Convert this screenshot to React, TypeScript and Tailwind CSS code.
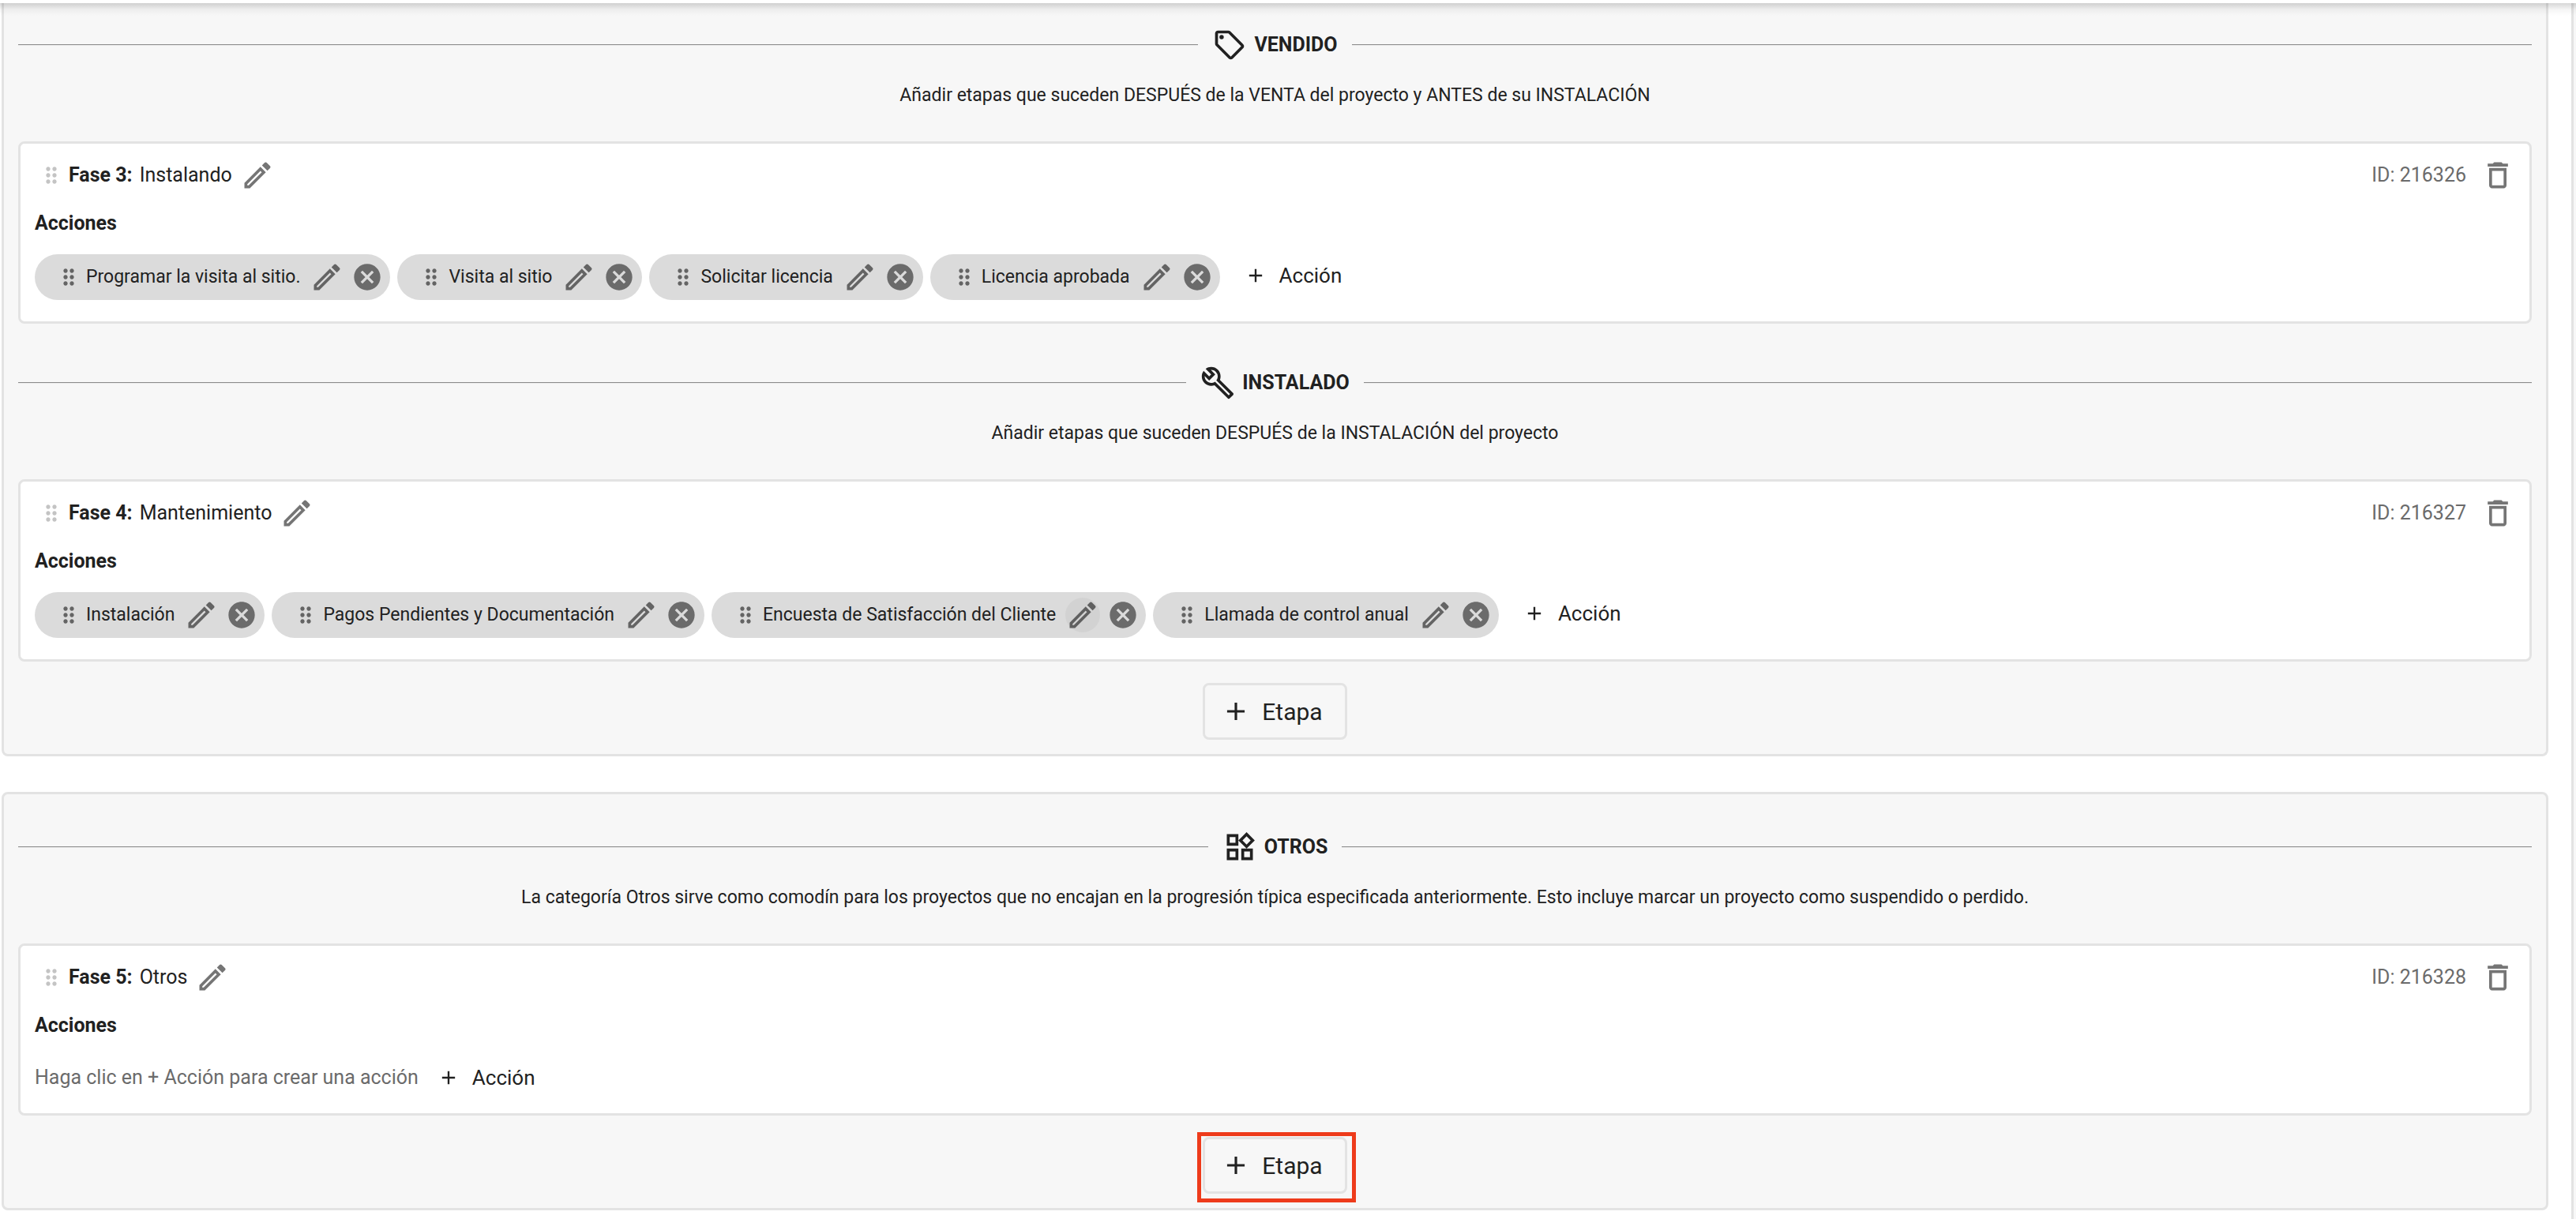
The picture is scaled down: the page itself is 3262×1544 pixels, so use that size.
import { MdAdd, MdCancel, MdDragIndicator, MdOutlineBuild, MdOutlineDelete, MdOutlineEdit, MdOutlineSell, MdOutlineWidgets } from "react-icons/md";

const vendido = ["Programar la visita al sitio.", "Visita al sitio", "Solicitar licencia", "Licencia aprobada"];
const instalado = ["Instalación", "Pagos Pendientes y Documentación", "Encuesta de Satisfacción del Cliente", "Llamada de control anual"];

function CategoryHeading({ icon: Icon, title, description }: any) {
  return (
    <header>
      <div className="flex items-center">
        <hr className="h-[2px] flex-1 border-t border-b border-t-[#8c8c8c] border-b-[#ebebeb]" />
        <h2 className="mx-[18px] flex items-center gap-[9px] text-[25px] leading-[28px] font-bold">
          <Icon size={44} />
          {title}
        </h2>
        <hr className="h-[2px] flex-1 border-t border-b border-t-[#8c8c8c] border-b-[#ebebeb]" />
      </div>
      <p className="mt-[28px] mb-[44px] text-center text-[23px] leading-[28px]">{description}</p>
    </header>
  );
}

function ActionChip({ name, active }: any) {
  return (
    <li className="mr-[9px] mb-[9px] flex h-[58px] items-center rounded-full bg-[#dbdbdb] pr-[9px] pl-[27px] text-[23px]">
      <MdDragIndicator size={32} className="text-black/54" />
      <span className="mr-3 ml-[6px] whitespace-nowrap">{name}</span>
      <button aria-label={`Editar ${name}`} className={`rounded-full text-black/54 ${active ? "bg-black/4" : ""}`}><MdOutlineEdit size={44} /></button>
      <button aria-label={`Quitar ${name}`} className="ml-[9px] text-[#6b6b6b]"><MdCancel size={40} /></button>
    </li>
  );
}

function PhaseCard({ number, name, id, actions = [], active }: any) {
  return (
    <article className="rounded-lg border-3 border-[#e3e3e3] bg-white p-[18px] text-[25px] leading-[28px]">
      <div className="flex items-center">
        <MdDragIndicator size={32} className="ml-[5px] text-[#c4c4c4]" />
        <h3 className="ml-[6px] font-bold">Fase {number}:</h3>
        <span className="mr-[10px] ml-[9px]">{name}</span>
        <button aria-label={`Editar ${name}`} className="text-black/54"><MdOutlineEdit size={44} /></button>
        <span className="mr-[18px] ml-auto text-[#6b6b6b]">ID: {id}</span>
        <button aria-label={`Eliminar ${name}`} className="text-black/54"><MdOutlineDelete size={44} /></button>
      </div>
      <h4 className="mt-[25px] mb-[25px] font-bold">Acciones</h4>
      <div className="flex flex-wrap items-start">
        {actions.length > 0 ? (
          <ul className="flex flex-wrap">
            {actions.map((a: string) => <ActionChip key={a} name={a} active={a === active} />)}
          </ul>
        ) : (
          <p className="mr-[2px] leading-[54px] text-[#6b6b6b]">Haga clic en + Acción para crear una acción</p>
        )}
        <button className="flex h-[54px] items-center gap-4 px-[22px] text-[26px]"><MdAdd size={28} />Acción</button>
      </div>
    </article>
  );
}

function AddStage({ highlighted }: any) {
  return (
    <div className="mt-[27px] flex justify-center">
      <div className="relative">
        <button className="flex h-[72px] items-center gap-[14px] rounded-lg border-3 border-[#e3e3e3] pr-[28px] pl-5 text-[30px]"><MdAdd size={38} />Etapa</button>
        {highlighted && <div className="pointer-events-none absolute -top-[6px] -right-[11px] -bottom-[11px] -left-[7px] border-5 border-[#ee3b1b]" />}
      </div>
    </div>
  );
}

export default function App() {
  return (
    <div className="relative flex min-h-screen flex-col bg-white font-['Roboto',sans-serif] text-[#212121]">
      <div className="h-1 bg-white" />
      <div className="pointer-events-none absolute inset-x-0 top-1 h-4 bg-linear-to-b from-black/16 via-black/4 to-transparent" />
      <div className="flex flex-1">
        <main className="ml-[2px] flex-1">
          <section className="rounded-b-lg border-3 border-t-0 border-[#e3e3e3] bg-[#f7f7f7] px-[18px] pt-[31px] pb-[18px]">
            <CategoryHeading icon={MdOutlineSell} title="VENDIDO" description="Añadir etapas que suceden DESPUÉS de la VENTA del proyecto y ANTES de su INSTALACIÓN" />
            <PhaseCard number={3} name="Instalando" id="216326" actions={vendido} />
            <div className="mt-[53px]">
              <CategoryHeading icon={MdOutlineBuild} title="INSTALADO" description="Añadir etapas que suceden DESPUÉS de la INSTALACIÓN del proyecto" />
            </div>
            <PhaseCard number={4} name="Mantenimiento" id="216327" actions={instalado} active="Encuesta de Satisfacción del Cliente" />
            <AddStage />
          </section>
          <section className="mt-[45px] rounded-lg border-3 border-[#e3e3e3] bg-[#f7f7f7] px-[18px] pt-[45px] pb-[18px]">
            <CategoryHeading icon={MdOutlineWidgets} title="OTROS" description="La categoría Otros sirve como comodín para los proyectos que no encajan en la progresión típica especificada anteriormente. Esto incluye marcar un proyecto como suspendido o perdido." />
            <PhaseCard number={5} name="Otros" id="216328" />
            <AddStage highlighted />
          </section>
        </main>
        <aside className="ml-[29px] w-[6px] border-l-3 border-[#e3e3e3] bg-[#f7f7f7]" />
      </div>
    </div>
  );
}
